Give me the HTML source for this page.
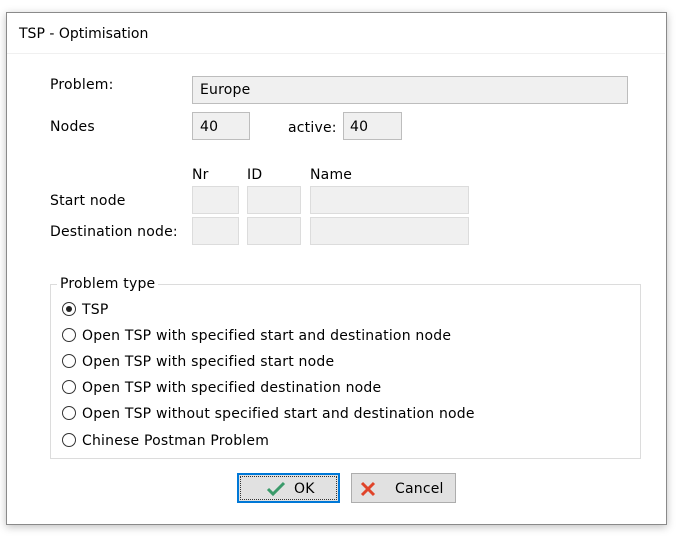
<!DOCTYPE html>
<html><head><style>
body{margin:0;width:683px;height:543px;background:#fff;font-family:"DejaVu Sans",sans-serif;font-size:14px;color:#000;position:relative;overflow:hidden}
.win{position:absolute;left:6px;top:12px;width:659px;height:511px;border:1px solid #8a8a8a;background:#fff;box-shadow:0 2px 8px rgba(0,0,0,.25)}
.t{position:absolute;white-space:nowrap;letter-spacing:0.2px;margin-top:1px}
.f{position:absolute;background:#f0f0f0;border:1px solid #bdbdbd;box-sizing:border-box}
.ff{position:absolute;background:#f0f0f0;border:1px solid #dcdcdc;box-sizing:border-box}
.r{position:absolute;width:14px;height:14px;border:1px solid #333;border-radius:50%;box-sizing:border-box;background:#fff}
.btn{position:absolute;background:#e1e1e1;border:1px solid #adadad;box-sizing:border-box;height:30px}
</style></head><body>
<div class="win"></div>
<div class="t" style="left:19px;top:25px;letter-spacing:0">TSP - Optimisation</div>
<div style="position:absolute;left:7px;top:53px;width:658px;height:1px;background:#f0f0f0"></div>
<div class="t" style="left:50px;top:76px">Problem:</div>
<div class="f" style="left:192px;top:76px;width:436px;height:28px"></div>
<div class="t" style="left:200px;top:81px">Europe</div>
<div class="t" style="left:50px;top:118px">Nodes</div>
<div class="f" style="left:192px;top:112px;width:58px;height:28px"></div>
<div class="t" style="left:200px;top:118px">40</div>
<div class="t" style="left:288px;top:119px">active:</div>
<div class="f" style="left:343px;top:112px;width:59px;height:28px"></div>
<div class="t" style="left:350px;top:118px">40</div>
<div class="t" style="left:192px;top:166px">Nr</div>
<div class="t" style="left:247px;top:166px">ID</div>
<div class="t" style="left:310px;top:166px">Name</div>
<div class="t" style="left:50px;top:192px">Start node</div>
<div class="t" style="left:50px;top:223px">Destination node:</div>
<div class="ff" style="left:192px;top:186px;width:47px;height:28px"></div>
<div class="ff" style="left:247px;top:186px;width:54px;height:28px"></div>
<div class="ff" style="left:310px;top:186px;width:159px;height:28px"></div>
<div class="ff" style="left:192px;top:217px;width:47px;height:28px"></div>
<div class="ff" style="left:247px;top:217px;width:54px;height:28px"></div>
<div class="ff" style="left:310px;top:217px;width:159px;height:28px"></div>
<div style="position:absolute;left:50px;top:284px;width:591px;height:175px;border:1px solid #dcdcdc;box-sizing:border-box"></div>
<div class="t" style="left:57px;top:275px;background:#fff;padding:0 3px">Problem type</div>
<div class="r" style="left:62px;top:302px"><div style="position:absolute;left:3px;top:3px;width:6px;height:6px;border-radius:50%;background:#222"></div></div>
<div class="t" style="left:82px;top:301px">TSP</div>
<div class="r" style="left:62px;top:328px"></div><div class="t" style="left:82px;top:327px">Open TSP with specified start and destination node</div>
<div class="r" style="left:62px;top:354px"></div><div class="t" style="left:82px;top:353px">Open TSP with specified start node</div>
<div class="r" style="left:62px;top:380px"></div><div class="t" style="left:82px;top:379px">Open TSP with specified destination node</div>
<div class="r" style="left:62px;top:406px"></div><div class="t" style="left:82px;top:405px">Open TSP without specified start and destination node</div>
<div class="r" style="left:62px;top:433px"></div><div class="t" style="left:82px;top:432px">Chinese Postman Problem</div>
<div class="btn" style="left:237px;top:473px;width:103px;border:2px solid #0078d7">
<div style="position:absolute;inset:1px;border:1px dotted #333"></div>
<svg style="position:absolute;left:27px;top:6px" width="20" height="16"><path d="M2 8 L7 13 L18 2" stroke="#3a9a6a" stroke-width="3" fill="none"/></svg>
<div class="t" style="left:55px;top:5px">OK</div></div>
<div class="btn" style="left:351px;top:473px;width:105px">
<svg style="position:absolute;left:8px;top:7px" width="16" height="16"><path d="M2 2 L14 14 M14 2 L2 14" stroke="#e0442a" stroke-width="3"/></svg>
<div class="t" style="left:43px;top:6px">Cancel</div></div>
</body></html>
